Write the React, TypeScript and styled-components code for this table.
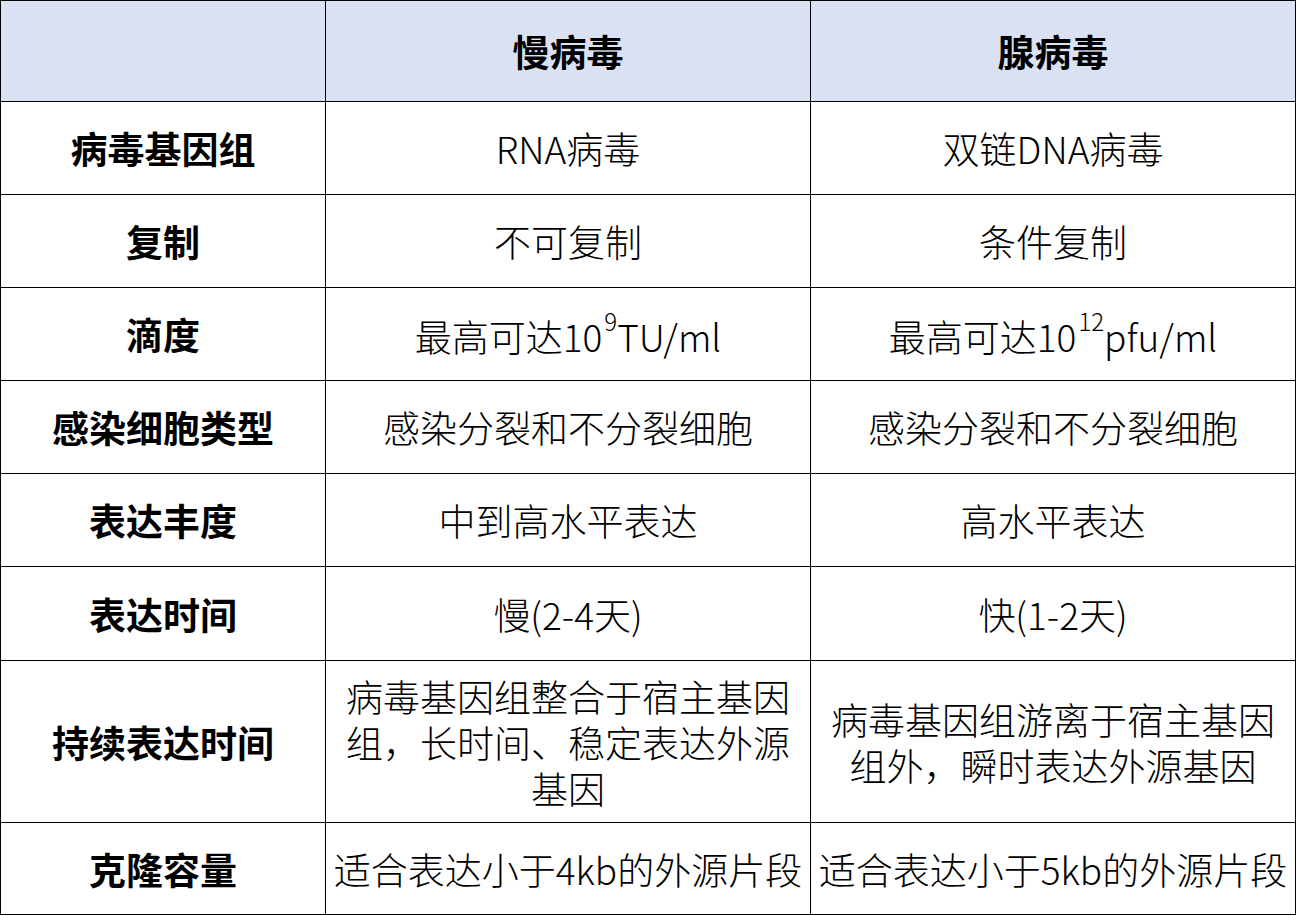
import React from 'react';
import styled, { createGlobalStyle } from 'styled-components';

const GlobalStyle = createGlobalStyle`
  html, body {
    margin: 0;
    padding: 0;
    background: #ffffff;
  }
  body {
    font-family: "Noto Sans CJK SC", "Noto Sans", sans-serif;
    color: #000000;
  }
`;

const Table = styled.table`
  border-collapse: collapse;
  table-layout: fixed;
  width: 1295px;
  font-size: 37px;
  line-height: 46px;
`;

const HeadRow = styled.tr`
  height: 101px;
  background-color: #d9e1f2;
`;

const Row = styled.tr<{ $h: number }>`
  height: ${p => p.$h}px;
`;

const Cell = styled.td<{ $bold?: boolean }>`
  border: 1px solid #000000;
  padding: 0 4px;
  text-align: center;
  vertical-align: middle;
  font-weight: ${p => (p.$bold ? 700 : 300)};
  word-break: break-all;
`;

const Sup = styled.sup`
  font-size: 24px;
  line-height: 24px;
  vertical-align: 21px;
  margin-left: 2px;
`;

type RowData = { label: string; a: React.ReactNode; b: React.ReactNode; h: number };

const rows: RowData[] = [
  { label: '病毒基因组', a: 'RNA病毒', b: '双链DNA病毒', h: 93 },
  { label: '复制', a: '不可复制', b: '条件复制', h: 93 },
  {
    label: '滴度',
    a: <>最高可达10<Sup>9</Sup>TU/ml</>,
    b: <>最高可达10<Sup>12</Sup>pfu/ml</>,
    h: 93,
  },
  { label: '感染细胞类型', a: '感染分裂和不分裂细胞', b: '感染分裂和不分裂细胞', h: 93 },
  { label: '表达丰度', a: '中到高水平表达', b: '高水平表达', h: 93 },
  { label: '表达时间', a: '慢(2-4天)', b: '快(1-2天)', h: 94 },
  {
    label: '持续表达时间',
    a: '病毒基因组整合于宿主基因组，长时间、稳定表达外源基因',
    b: '病毒基因组游离于宿主基因组外，瞬时表达外源基因',
    h: 162,
  },
  { label: '克隆容量', a: '适合表达小于4kb的外源片段', b: '适合表达小于5kb的外源片段', h: 92 },
];

export default function App() {
  return (
    <>
      <GlobalStyle />
      <Table>
        <colgroup>
          <col style={{ width: 325 }} />
          <col style={{ width: 485 }} />
          <col style={{ width: 485 }} />
        </colgroup>
        <thead>
          <HeadRow>
            <Cell $bold></Cell>
            <Cell $bold>慢病毒</Cell>
            <Cell $bold>腺病毒</Cell>
          </HeadRow>
        </thead>
        <tbody>
          {rows.map(r => (
            <Row key={r.label} $h={r.h}>
              <Cell $bold>{r.label}</Cell>
              <Cell>{r.a}</Cell>
              <Cell>{r.b}</Cell>
            </Row>
          ))}
        </tbody>
      </Table>
    </>
  );
}
